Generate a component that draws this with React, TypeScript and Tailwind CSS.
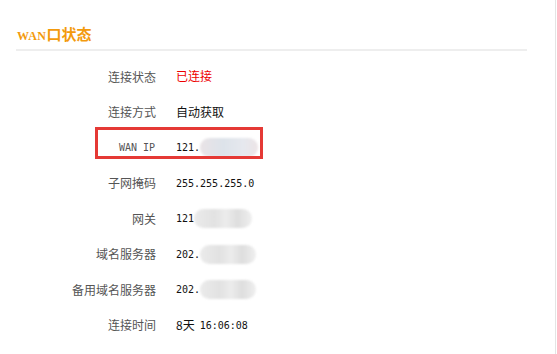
import React from 'react';

type Row = {
    label: string;
    value: React.ReactNode;
    highlight?: boolean;
};

const cjk = "font-['Noto_Sans_CJK_SC',sans-serif]";
const mono = "font-['DejaVu_Sans_Mono','Liberation_Mono',monospace] text-[10px]";

function Blur({ w, tone }: { w: number; tone: 'grey' | 'pink' }) {
    // masked part of an address, drawn as a soft smudge
    const bg =
        tone === 'pink'
            ? 'bg-[linear-gradient(90deg,#e9e3e6,#dde3ea_40%,#e6e8ee_75%,#ece4e6)]'
            : 'bg-[linear-gradient(90deg,#ebebeb,#e2e2e2_35%,#ececec_55%,#dedede_75%,#efefef)]';
    return (
        <span
            className={`inline-block h-[19px] rounded-full blur-[1px] align-middle ${bg}`}
            style={{ width: w }}
        />
    );
}

export default function App() {
    const rows: Row[] = [
        { label: '连接状态', value: <span className={`${cjk} text-[#ee0000]`}>已连接</span> },
        { label: '连接方式', value: <span className={cjk}>自动获取</span> },
        {
            label: 'WAN IP',
            highlight: true,
            value: (
                <span className="flex items-center">
                    <span className={mono}>121.</span>
                    <Blur w={58} tone="pink" />
                </span>
            )
        },
        { label: '子网掩码', value: <span className={mono}>255.255.255.0</span> },
        {
            label: '网关',
            value: (
                <span className="flex items-center">
                    <span className={mono}>121</span>
                    <Blur w={58} tone="grey" />
                </span>
            )
        },
        {
            label: '域名服务器',
            value: (
                <span className="flex items-center">
                    <span className={mono}>202.</span>
                    <Blur w={56} tone="grey" />
                </span>
            )
        },
        {
            label: '备用域名服务器',
            value: (
                <span className="flex items-center">
                    <span className={mono}>202.</span>
                    <Blur w={56} tone="grey" />
                </span>
            )
        },
        {
            label: '连接时间',
            value: (
                <span className="flex items-center">
                    <span className={cjk}>8天</span>
                    <span className={`${mono} ml-[5px]`}>16:06:08</span>
                </span>
            )
        }
    ];

    return (
        <div className="w-[557px] h-[354px] bg-white overflow-hidden">
            <div className="w-[556px] h-full border-r border-[#e4e4e4]">
                {/* Header */}
                <div className="ml-[16px] mr-[28px] pt-[23px] h-[51px] border-b-2 border-[#eeeeee]">
                    <h1 className="flex items-baseline text-[#f39a0d] font-bold pl-[1px]">
                        <span className="font-['Liberation_Serif',serif] text-[12px] tracking-[0.5px]">WAN</span>
                        <span className={`${cjk} text-[15px]`}>口状态</span>
                    </h1>
                </div>

                {/* Status rows */}
                <div className="pt-[8px]">
                    {rows.map((row) => (
                        <div key={row.label} className="relative h-[35.5px] grid grid-cols-[156px_1fr] gap-x-[20px] items-center text-[12px]">
                            <div
                                className={`text-right text-[#555555] ${row.label === 'WAN IP' ? `${mono} pr-[1px]` : cjk}`}
                            >
                                {row.label}
                            </div>
                            <div className="text-[#111111] text-[12px]">{row.value}</div>
                            {row.highlight && (
                                <div className="absolute left-[95px] top-[-3px] w-[168px] h-[32px] border-[3px] border-[#e53935]" />
                            )}
                        </div>
                    ))}
                </div>
            </div>
        </div>
    );
}
